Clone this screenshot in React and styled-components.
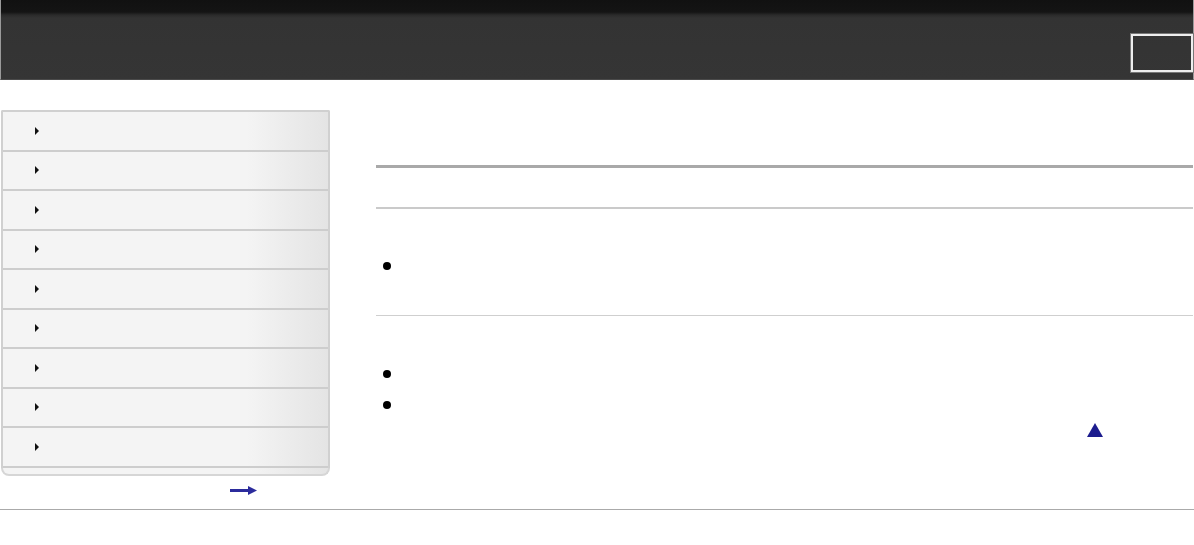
import React from "react";
import styled, { createGlobalStyle } from "styled-components";

const GlobalStyle = createGlobalStyle`
  body {
    margin: 0;
    background: #fff;
    font-family: "Liberation Sans", Arial, sans-serif;
    font-size: 13px;
    color: #000;
  }
`;

const Page = styled.div`
  width: 1194px;
`;

const Header = styled.header`
  height: 80px;
  box-sizing: border-box;
  border-left: 1px solid #9a9a9a;
  border-right: 1px solid #9a9a9a;
  background: linear-gradient(#111 0, #141414 12px, #2a2a2a 15px, #333 18px, #353535 100%);
  border-bottom: 1px solid #4a4a4a;
  display: flex;
  justify-content: flex-end;
  align-items: flex-end;
  padding-bottom: 7px;
`;

const SearchBox = styled.div`
  width: 58px;
  height: 34px;
  border: 2px solid #eee;
  box-shadow: 0 0 0 1px #777;
  margin-right: 0;
`;

const Main = styled.div`
  display: flex;
  padding-top: 30px;
  align-items: flex-start;
`;

const SideColumn = styled.div`
  width: 330px;
  padding-left: 1px;
  box-sizing: border-box;
`;

const Nav = styled.ul`
  list-style: none;
  margin: 0;
  padding: 0;
  border: 2px solid #d0d0d0;
  border-bottom: none;
  border-radius: 2px 2px 0 0;
  background: linear-gradient(90deg, #f4f4f4 0, #f4f4f4 75%, #e4e4e4 100%);
`;

const NavItem = styled.li`
  height: 37.5px;
  border-bottom: 2px solid #cdcdcd;
  display: flex;
  align-items: center;
  padding-left: 32px;
`;

const Caret = styled.span`
  width: 0;
  height: 0;
  border-top: 4px solid transparent;
  border-bottom: 4px solid transparent;
  border-left: 4px solid #111;
`;

const NavFoot = styled.div`
  height: 6px;
  border: 2px solid #d6d6d6;
  border-top: none;
  border-radius: 0 0 8px 8px;
  background: linear-gradient(90deg, #f4f4f4 0, #f4f4f4 75%, #e4e4e4 100%);
`;

const MoreRow = styled.div`
  display: flex;
  justify-content: flex-end;
  padding: 10px 73px 0 0;
`;

const Content = styled.main`
  flex: 1;
  margin-left: 46px;
  margin-right: 1px;
`;

const Title = styled.h1`
  margin: 0;
  height: 55px;
  border-bottom: 3px solid #a9a9a9;
`;

const Section = styled.section`
  border-bottom: ${(p) => (p.$last ? "none" : "1px solid #cfcfcf")};
`;

const SectionHead = styled.h2`
  margin: 0;
  height: 39px;
  border-bottom: 2px solid #cacaca;
`;

const List = styled.ul`
  list-style: none;
  margin: 0;
  padding: ${(p) => p.$pad};
  display: flex;
  flex-direction: column;
  gap: ${(p) => p.$gap || "0px"};
`;

const Bullet = styled.li`
  height: 22px;
  display: flex;
  align-items: center;
  padding-left: 7px;

  &::before {
    content: "";
    width: 8px;
    height: 8px;
    border-radius: 50%;
    background: #000;
  }
`;

const BackRow = styled.div`
  display: flex;
  justify-content: flex-end;
  padding: 7px 90px 0 0;
`;

const Footer = styled.div`
  margin-top: 14px;
  border-top: 1px solid #aaa;
  height: 35px;
`;

const ArrowRight = () => (
  <svg width="27" height="9" viewBox="0 0 27 9">
    <rect x="0" y="3" width="19" height="3" fill="#2b2b9c" />
    <polygon points="18,0 27,4.5 18,9" fill="#2b2b9c" />
  </svg>
);

const ArrowUp = () => (
  <svg width="16" height="14" viewBox="0 0 16 14">
    <polygon points="8,0 16,14 0,14" fill="#1c1c8e" />
  </svg>
);

const App = () => {
  const items = Array.from({ length: 9 });

  return (
    <Page>
      <GlobalStyle />
      <Header>
        <SearchBox />
      </Header>
      <Main>
        <SideColumn>
          <Nav>
            {items.map((_, i) => (
              <NavItem key={i}>
                <Caret />
              </NavItem>
            ))}
          </Nav>
          <NavFoot />
          <MoreRow>
            <ArrowRight />
          </MoreRow>
        </SideColumn>
        <Content>
          <Title />
          <Section>
            <SectionHead />
            <List $pad="46px 0 38px">
              <Bullet />
            </List>
          </Section>
          <Section $last>
            <List $pad="47px 0 0" $gap="9px">
              <Bullet />
              <Bullet />
            </List>
            <BackRow>
              <ArrowUp />
            </BackRow>
          </Section>
        </Content>
      </Main>
      <Footer />
    </Page>
  );
};

export default App;
